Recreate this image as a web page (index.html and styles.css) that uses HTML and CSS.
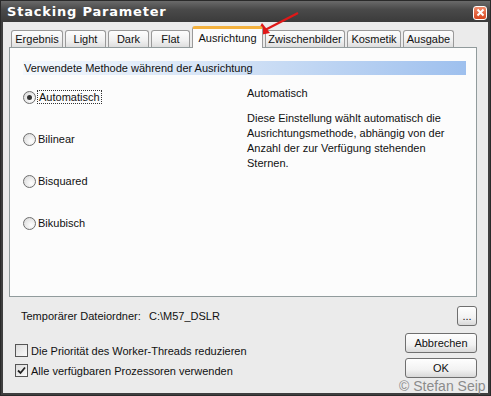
FILE: index.html
```html
<!DOCTYPE html>
<html lang="de">
<head>
  <meta charset="UTF-8" />
  <title>Stacking Parameter</title>
  <link rel="stylesheet" href="styles.css">
</head>
<body>
<div class="window">
  <div class="titlebar">
    <span class="title">Stacking Parameter</span>
    <div class="close">
      <svg width="9" height="9" viewBox="0 0 9 9"><path d="M1.5 1.5 L7.5 7.5 M7.5 1.5 L1.5 7.5" stroke="#fff" stroke-width="2"/></svg>
    </div>
  </div>

  <div class="client">
    <div class="tabs">
      <div class="tab w-ergebnis">Ergebnis</div>
      <div class="tab w-light">Light</div>
      <div class="tab w-dark">Dark</div>
      <div class="tab w-flat">Flat</div>
      <div class="tab active w-ausrichtung">Ausrichtung</div>
      <div class="tab w-zwischen">Zwischenbilder</div>
      <div class="tab w-kosmetik">Kosmetik</div>
      <div class="tab w-ausgabe">Ausgabe</div>
    </div>

    <div class="panel">
      <div class="group-title">Verwendete Methode während der Ausrichtung</div>
      <div class="method">
        <div class="options">
          <label class="option"><span class="radio checked"></span><span class="focus">Automatisch</span></label>
          <label class="option"><span class="radio"></span><span>Bilinear</span></label>
          <label class="option"><span class="radio"></span><span>Bisquared</span></label>
          <label class="option"><span class="radio"></span><span>Bikubisch</span></label>
        </div>
        <div class="info">
          <p class="info-title">Automatisch</p>
          <p>Diese Einstellung wählt automatisch die Ausrichtungsmethode, abhängig von der Anzahl der zur Verfügung stehenden Sternen.</p>
        </div>
      </div>
    </div>

    <div class="footer">
      <div class="folder-row">
        <span class="folder-label">Temporärer Dateiordner:</span>
        <span class="folder-path">C:\M57_DSLR</span>
        <button class="btn btn-dots">...</button>
      </div>
      <div class="bottom-row">
        <div class="checks">
          <label class="check"><span class="box"></span>Die Priorität des Worker-Threads reduzieren</label>
          <label class="check"><span class="box checked">
            <svg width="9" height="9" viewBox="0 0 9 9"><path d="M1 4.5 L3.5 7 L8 1.5" fill="none" stroke="#222" stroke-width="1.8"/></svg>
          </span>Alle verfügbaren Prozessoren verwenden</label>
        </div>
        <div class="buttons">
          <button class="btn btn-wide">Abbrechen</button>
          <button class="btn btn-wide">OK</button>
        </div>
      </div>
    </div>
  </div>

  <svg class="arrow" width="60" height="30" viewBox="0 0 60 30">
    <path d="M47 2 L14 19" stroke="#e01818" stroke-width="2.2" fill="none"/>
    <path d="M4 25 L11 12 L19 22 Z" fill="#e01818"/>
  </svg>
  <div class="watermark">© Stefan Seip</div>
</div>
</body>
</html>
```

FILE: styles.css
```css
* {
  margin: 0;
  padding: 0;
  box-sizing: border-box;
}

body {
  font-family: 'Liberation Sans', Arial, sans-serif;
  font-size: 11px;
  color: #111;
  background: #fff;
}

.window {
  position: relative;
  width: 491px;
  height: 396px;
  background: #3f3f3f;
  border: 1px solid #2a2a2a;
  display: flex;
  flex-direction: column;
}

.titlebar {
  height: 21px;
  display: flex;
  align-items: center;
  justify-content: space-between;
  padding: 0 3px 0 6px;
  background: linear-gradient(#6a6a6a, #4a4a4a 40%, #3b3b3b);
}

.title {
  color: #fff;
  font-family: 'DejaVu Sans', sans-serif;
  font-weight: bold;
  font-size: 13px;
  letter-spacing: 0.8px;
}

.close {
  width: 14px;
  height: 14px;
  border: 1px solid #fff;
  border-radius: 3px;
  background: linear-gradient(#f08a6a, #d8461e);
  display: flex;
  align-items: center;
  justify-content: center;
  margin-top: 2px;
}

.client {
  flex: 1;
  margin: 0 2px 2px 2px;
  background: #ebebeb;
  padding: 5px 11px 0 6px;
  display: flex;
  flex-direction: column;
}

.tabs {
  display: flex;
  align-items: flex-end;
  gap: 2px;
  padding-left: 2px;
  height: 20px;
}

.tab {
  height: 17px;
  border: 1px solid #9a9a9a;
  border-bottom: none;
  border-radius: 3px 3px 0 0;
  background: linear-gradient(#fdfdfd, #f0f0f0 60%, #dedede);
  text-align: center;
  line-height: 16px;
  font-size: 11px;
  color: #111;
}

.tab.active {
  height: 22px;
  margin-bottom: -1px;
  border-top: 3px solid #f3b13e;
  background: #fcfcfc;
  line-height: 18px;
  position: relative;
  z-index: 1;
}

.w-ergebnis { width: 52px; }
.w-light { width: 41px; }
.w-dark { width: 41px; }
.w-flat { width: 39px; }
.w-ausrichtung { width: 71px; }
.w-zwischen { width: 80px; }
.w-kosmetik { width: 54px; }
.w-ausgabe { width: 51px; }

.panel {
  height: 250px;
  border: 1px solid #919b9c;
  background: #fcfcfc;
  padding: 13px 10px 0 13px;
}

.group-title {
  height: 14px;
  line-height: 14px;
  width: 443px;
  padding-left: 1px;
  background: linear-gradient(to right, #f4f8fd, #d4e3f6 45%, #9ec0ee);
}

.method {
  display: flex;
  padding-top: 15px;
}

.options {
  width: 224px;
  display: flex;
  flex-direction: column;
  gap: 28px;
}

.option {
  display: flex;
  align-items: center;
  height: 14px;
  gap: 2px;
}

.radio {
  width: 13px;
  height: 13px;
  border-radius: 50%;
  border: 1px solid #6e6e6e;
  background: radial-gradient(circle at 65% 65%, #fff, #e2e2e2 70%, #cfcfcf);
  display: flex;
  align-items: center;
  justify-content: center;
}

.radio.checked::after {
  content: "";
  width: 5px;
  height: 5px;
  border-radius: 50%;
  background: #333;
}

.focus {
  outline: 1px dotted #333;
  padding: 0 1px;
}

.info {
  width: 215px;
  line-height: 15px;
}

.info-title {
  margin-top: -4px;
  margin-bottom: 10px;
}

.footer {
  padding: 9px 0 0 6px;
}

.folder-row {
  display: flex;
  align-items: center;
  height: 20px;
  padding-left: 6px;
  white-space: nowrap;
}

.folder-label {
  width: 128px;
}

.folder-path {
  flex: 1;
}

.btn {
  font-family: inherit;
  font-size: 11px;
  color: #111;
  border: 1px solid #6f6f6f;
  border-radius: 3px;
  background: linear-gradient(#fefefe, #f2f2f2 60%, #d9d9d9);
}

.btn-dots {
  width: 20px;
  height: 20px;
  line-height: 14px;
}

.bottom-row {
  display: flex;
  justify-content: space-between;
  padding-top: 7px;
}

.checks {
  padding-top: 11px;
  display: flex;
  flex-direction: column;
  gap: 7px;
}

.check {
  display: flex;
  align-items: center;
  height: 13px;
  gap: 3px;
}

.box {
  width: 13px;
  height: 13px;
  border: 1px solid #555;
  background: linear-gradient(135deg, #dcdcdc, #fafafa);
  display: flex;
  align-items: center;
  justify-content: center;
}

.buttons {
  display: flex;
  flex-direction: column;
  gap: 5px;
}

.btn-wide {
  width: 72px;
  height: 20px;
}

.arrow {
  position: absolute;
  left: 250px;
  top: 10px;
}

.watermark {
  position: absolute;
  left: 398px;
  top: 377px;
  font-size: 14px;
  white-space: nowrap;
  color: #8c8c8c;
}
```
